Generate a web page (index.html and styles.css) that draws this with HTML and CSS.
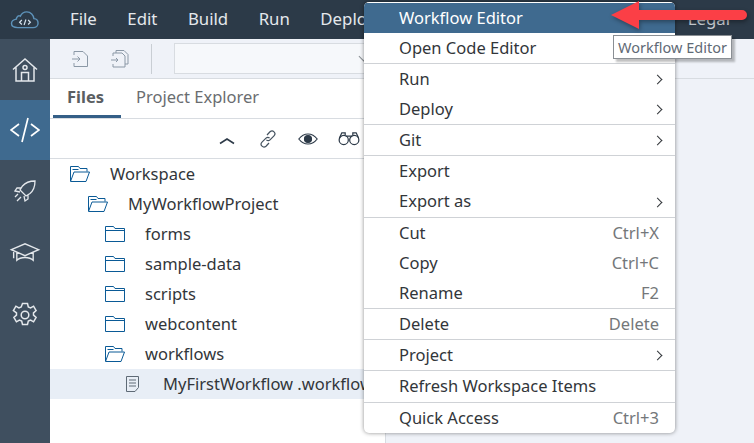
FILE: index.html
```html
<!DOCTYPE html>
<html>
	<head>
		<meta charset="UTF-8">
		<title>Workflow Editor</title>
		<link rel="stylesheet" href="styles.css">
	</head>
	<body>
		<div id="wrap">
			<div class="topbar">
				<svg class="logo" width="30" height="18" viewBox="0 0 32 20" fill="none" stroke="#5e93ba" stroke-width="1.600">
					<path d="M8 18.500h17c3 0 5.500-2.200 5.500-5 0-2.700-2-4.800-4.600-5C25.500 4.500 22.500 1 18 1c-3.500 0-6 2-7.200 4.800C9.800 5.200 8 5.500 7 7 6.500 7.800 6.400 8.300 6.400 9 3 9.500 1 11.200 1 14c0 2.800 3 4.500 7 4.500z"/>
					<path d="M12.500 10l-2.500 2.500 2.500 2.500M19.500 10l2.500 2.500-2.500 2.500M17 9.500l-2 6" stroke-width="1.300" stroke="#d5e3ee"/>
				</svg>
				<ul class="mainmenu">
					<li>File</li>
					<li>Edit</li>
					<li>Build</li>
					<li>Run</li>
					<li>Deploy</li>
				</ul>
				<span class="legal">Legal</span>
			</div>
			<div class="body">
				<div class="rail">
					<a class="railitem">
						<svg width="26" height="26" viewBox="0 0 26 26" fill="none" stroke="#e4e8ec" stroke-width="1.500">
							<path d="M1 12.500L13 2l12 10.500M4 10.500V24h18V10.500"/>
							<circle cx="13" cy="10.500" r="2"/>
							<path d="M9.500 24v-8.500h7V24M13 15.500V15"/>
						</svg>
					</a>
					<a class="railitem active">
						<svg width="30" height="26" viewBox="0 0 30 26" fill="none" stroke="#fff" stroke-width="1.700">
							<path d="M9 7l-8 6 8 6M21 7l8 6-8 6M18 1l-6 24"/>
						</svg>
					</a>
					<a class="railitem">
						<svg width="22" height="24" viewBox="0 0 22 22" fill="none" stroke="#e4e8ec" stroke-width="1.300">
							<path d="M21 1c-6 0-10 2-12.500 5L6 10l6 6 4-2.500C19 11 21 7 21 1zM7 8H3L1 11l5 1M14 15v4l-3 2-1-5M4 14l-3 3M7 17l-3 3M5.500 18.500L3 21"/>
						</svg>
					</a>
					<a class="railitem">
						<svg width="32" height="20" viewBox="0 0 32 22" fill="none" stroke="#e4e8ec" stroke-width="1.500">
							<path d="M1 8.500L16 2l15 6.500L16 15zM7 11.500V20c2-2 5-3 9-3s7 1 9 3v-8.500M3.500 9.500V18"/>
						</svg>
					</a>
					<a class="railitem gear">
						<svg width="26" height="26" viewBox="0 0 26 26" fill="none" stroke="#e4e8ec" stroke-width="1.500">
							<path d="M10.500 1.500h5l.8 3.500 2.300 1 3-1.800 2.500 4.300-2.600 2.400v2.200l2.600 2.400-2.500 4.300-3-1.800-2.300 1-.8 3.500h-5l-.8-3.500-2.300-1-3 1.800-2.500-4.300 2.600-2.400v-2.200L1.400 8.500l2.500-4.300 3 1.800 2.300-1z"/>
							<circle cx="13" cy="13" r="3.800"/>
						</svg>
					</a>
				</div>
				<div class="sidebar">
					<div class="toolbar">
						<svg class="tool" width="18" height="18" viewBox="0 0 18 18" fill="none" stroke="#8b98a6">
							<path d="M3 5V1.500h9l4.500 4.500v10.500H3V13M1 9h8M6.500 6.500L9 9l-2.500 2.500"/>
						</svg>
						<svg class="tool" width="18" height="18" viewBox="0 0 18 18" fill="none" stroke="#8b98a6">
							<path d="M2 6V3h9l3 3v11H2v-3M0 10h7M5 8l2 2-2 2M5 3V.5h8l4 4V14h-3"/>
						</svg>
						<span class="toolsep"></span>
						<div class="combo"><i class="comboarrow"></i></div>
					</div>
					<div class="tabs">
						<span class="tab current">Files</span>
						<span class="tab">Project Explorer</span>
					</div>
					<div class="actions">
						<svg class="act-up" width="16" height="8" viewBox="0 0 16 8" fill="none" stroke="#2d3a48" stroke-width="1.600"><path d="M1 6.500L8 2l7 4.500"/></svg>
						<svg class="act-link" width="18" height="18" viewBox="0 0 18 18" fill="none" stroke="#44525f" stroke-width="1.200"><path d="M8 5l3-3.200c1.200-1.100 2.900-1.100 4 0s1.100 2.900 0 4l-4 4c-1 1-2.600 1-3.600 0M10 13l-3 3.200c-1.200 1.100-2.900 1.100-4 0s-1.100-2.900 0-4l4-4c1-1 2.600-1 3.600 0"/></svg>
						<svg width="20" height="12" viewBox="0 0 20 12" fill="none" stroke="#2d3a48" stroke-width="1.200"><path d="M.8 6C3.500 2.500 6.500 1 10 1s6.500 1.500 9.200 5c-2.700 3.500-5.700 5-9.200 5S3.500 9.500.8 6z"/><circle cx="10" cy="6" r="3.500" fill="#2d3a48"/></svg>
						<svg width="22" height="15" viewBox="0 0 23 15" fill="none" stroke="#2d3a48" stroke-width="1.300"><circle cx="6" cy="9" r="4.800"/><circle cx="17" cy="9" r="4.800"/><path d="M1.500 7L4 1.500h3.500V4M21.500 7L19 1.500h-3.500V4M8 5h7"/></svg>
					</div>
					<ul class="tree">
						<li class="lvl0"><svg class="ico"><use href="#open"/></svg>Workspace</li>
						<li class="lvl1"><svg class="ico"><use href="#open"/></svg>MyWorkflowProject</li>
						<li class="lvl2"><svg class="ico"><use href="#closed"/></svg>forms</li>
						<li class="lvl2"><svg class="ico"><use href="#closed"/></svg>sample-data</li>
						<li class="lvl2"><svg class="ico"><use href="#closed"/></svg>scripts</li>
						<li class="lvl2"><svg class="ico"><use href="#closed"/></svg>webcontent</li>
						<li class="lvl2"><svg class="ico"><use href="#open"/></svg>workflows</li>
						<li class="lvl3 picked"><svg class="ico"><use href="#doc"/></svg>MyFirstWorkflow .workflow</li>
					</ul>
				</div>
				<div class="editor">
					<div class="editortop"></div>
				</div>
			</div>

			<ul class="ctxmenu">
				<li class="hover">Workflow Editor</li>
				<li class="endgroup">Open Code Editor</li>
				<li>Run<i class="more"></i></li>
				<li class="endgroup">Deploy<i class="more"></i></li>
				<li class="endgroup">Git<i class="more"></i></li>
				<li>Export</li>
				<li class="endgroup tall">Export as<i class="more"></i></li>
				<li>Cut<span class="key">Ctrl+X</span></li>
				<li>Copy<span class="key">Ctrl+C</span></li>
				<li class="endgroup">Rename<span class="key">F2</span></li>
				<li class="endgroup">Delete<span class="key">Delete</span></li>
				<li class="endgroup">Project<i class="more"></i></li>
				<li class="endgroup tall">Refresh Workspace Items</li>
				<li>Quick Access<span class="key">Ctrl+3</span></li>
			</ul>

			<div class="tooltip">Workflow Editor</div>

			<svg class="arrow" width="140" height="32" viewBox="0 0 140 32">
				<path d="M0 15L28 1v9h103a5 5 0 0 1 0 10H28v9z" fill="#fb3f46"/>
			</svg>
		</div>

		<svg width="0" height="0" class="defs">
			<symbol id="open" viewBox="0 0 20 16">
				<path d="M.5 15V.5h8l1.500 2h7v3M.5 15.500h15.500l3.500-9.500H4zM2.500 3.500h6" fill="none" stroke="#0a5a96"/>
			</symbol>
			<symbol id="closed" viewBox="0 0 20 16">
				<path d="M.5.5h8l1.500 2h9.500v13H.5zM.5 4.500h19" fill="none" stroke="#0a5a96"/>
			</symbol>
			<symbol id="doc" viewBox="0 0 20 16">
				<path d="M3.500.5h12v11l-3.500 4H3.500zM6 4h7M6 7h7M6 10h7" fill="none" stroke="#5e6a76"/>
			</symbol>
		</svg>
	</body>
</html>
```

FILE: styles.css
```css
body {
  margin: 0;
}

html, body{
	height: 100%;
	overflow: hidden;
}
body{
	font-family: "Noto Sans", "Open Sans", sans-serif;
	font-size: 16.5px;
	color: #32363a;
}
ul{
	margin: 0;
	padding: 0;
	list-style: none;
}
.defs{
	position: absolute;
}
#wrap{
	position: relative;
	display: flex;
	flex-direction: column;
	width: 754px;
	height: 443px;
	overflow: hidden;
}

/* top bar */
.topbar{
	display: flex;
	align-items: center;
	flex: none;
	height: 39px;
	box-sizing: border-box;
	padding-bottom: 2px;
	background: #2c3a48;
	color: #e4e8ec;
	font-size: 16.800px;
}
.logo{
	flex: none;
	margin: 2px 0 0 10px;
}
.mainmenu{
	display: flex;
	gap: 30.500px;
	margin-left: 30px;
}
.legal{
	margin-left: auto;
	margin-right: 24px;
	color: #c9ced4;
}

.body{
	display: flex;
	flex: 1;
	min-height: 0;
}

/* left rail */
.rail{
	flex: none;
	width: 50px;
	background: #3f4f5f;
}
.railitem{
	display: flex;
	align-items: center;
	justify-content: center;
	height: 61px;
}
.railitem.active{
	height: 60px;
	background: #3f6a8f;
}
.railitem.gear{
	margin-top: 2px;
}

/* files panel */
.sidebar{
	flex: none;
	width: 336px;
	background: #fff;
	border-right: 1px solid #d8dce1;
	box-sizing: border-box;
}
.toolbar{
	display: flex;
	align-items: center;
	height: 40px;
	box-sizing: border-box;
	padding-left: 21px;
	background: #eff2f8;
	border-bottom: 1px solid #d8dce1;
}
.tool{
	flex: none;
	margin-right: 22px;
}
.toolsep{
	flex: none;
	width: 1px;
	height: 30px;
	background: #c9ced4;
}
.combo{
	display: flex;
	align-items: center;
	flex: 1;
	height: 31px;
	margin: 0 6px 0 22px;
	padding-left: 185px;
	box-sizing: border-box;
	background: #f6f8fb;
	border: 1px solid #d8dce1;
}
.comboarrow{
	width: 6px;
	height: 6px;
	margin-top: -4px;
	border-right: 1px solid #8a8f94;
	border-bottom: 1px solid #8a8f94;
	transform: rotate(45deg);
}
.tabs{
	display: flex;
	height: 40px;
	box-sizing: border-box;
	padding-left: 3px;
	border-bottom: 1px solid #d8dce1;
}
.tab{
	padding: 0 15px;
	line-height: 35px;
	color: #6a6d70;
}
.tab.current{
	padding: 0 17px 0 14px;
	font-weight: 700;
	color: #5a5e62;
	border-bottom: 3px solid #345f87;
	height: 36px;
}
.actions{
	display: flex;
	align-items: center;
	justify-content: flex-end;
	gap: 20px;
	height: 40px;
	box-sizing: border-box;
	padding-right: 25px;
	border-bottom: 1px solid #d8dce1;
}
.act-up{
	margin: 5px 4px 0 0;
}
.act-link{
	margin-right: 1px;
}
.tree li{
	display: flex;
	align-items: center;
	height: 30px;
	box-sizing: border-box;
	padding-bottom: 2px;
	white-space: nowrap;
}
.ico{
	flex: none;
	width: 20px;
	height: 16px;
	margin: 2px 20px 0 0;
}
.lvl0{
	padding-left: 20px;
}
.lvl1{
	padding-left: 38px;
}
.lvl2{
	padding-left: 55px;
}
.lvl3{
	padding-left: 73px;
}
.tree .picked{
	background: #e8eef6;
}

.editor{
	flex: 1;
	background: #eff2f8;
}
.editortop{
	height: 40px;
	box-sizing: border-box;
	border-bottom: 1px solid #d8dce1;
}

/* context menu */
.ctxmenu{
	position: absolute;
	left: 364px;
	top: 2px;
	width: 311px;
	height: 431px;
	padding-top: 1px;
	box-sizing: border-box;
	background: #fff;
	border-radius: 5px;
	overflow: hidden;
	box-shadow: 0 0 4px rgba(0,0,0,.45);
}
.ctxmenu li{
	display: flex;
	align-items: center;
	justify-content: space-between;
	height: 30px;
	box-sizing: border-box;
	padding: 0 16px 2px 35px;
	color: #32363a;
}
.ctxmenu li.endgroup{
	height: 31px;
	border-bottom: 1px solid #cfd2d6;
}
.ctxmenu li.tall{
	height: 32px;
}
.ctxmenu li.hover{
	background: #3f6a8f;
	color: #fff;
}
.key{
	color: #74777a;
}
.more{
	width: 6px;
	height: 6px;
	margin: 3px -2px 0 0;
	border-top: 1px solid #32363a;
	border-right: 1px solid #32363a;
	transform: rotate(45deg);
}

.tooltip{
	position: absolute;
	left: 613px;
	top: 35px;
	width: 119px;
	height: 24px;
	line-height: 22px;
	box-sizing: border-box;
	text-align: center;
	font-size: 14.500px;
	color: #5f6a76;
	background: #fff;
	border: 1px solid #8a8f94;
	box-shadow: 3px 3px 2px rgba(0,0,0,.25);
	white-space: nowrap;
}
.arrow{
	position: absolute;
	left: 611px;
	top: 0;
	filter: drop-shadow(1px 2px 2px rgba(0,0,0,.35));
}
```
